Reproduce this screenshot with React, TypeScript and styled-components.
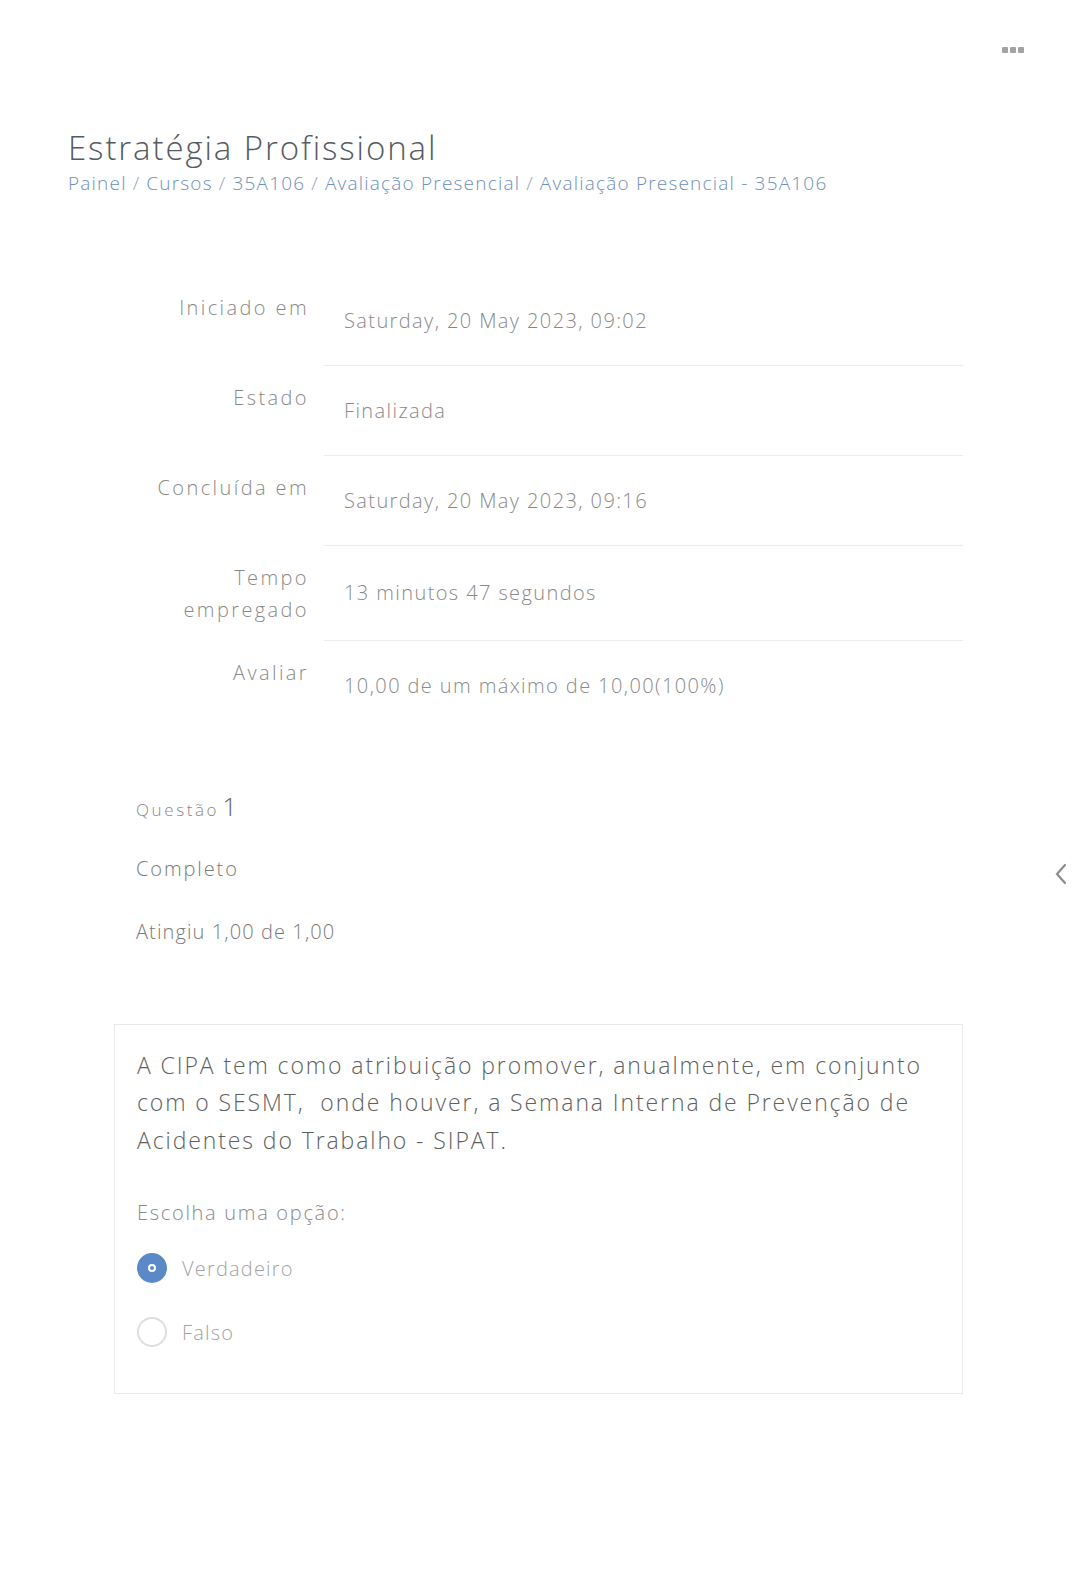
import styled, { createGlobalStyle } from 'styled-components';

const GlobalStyle = createGlobalStyle`
  html, body {
    margin: 0;
    padding: 0;
    background: #fff;
  }
  body {
    font-family: 'Open Sans', 'Liberation Sans', sans-serif;
    font-weight: 300;
    color: #777;
  }
`;

const StyledPage = styled.div`
  position: relative;
  width: 1077px;
  min-height: 1570px;
`;

const StyledTopBar = styled.div`
  display: flex;
  justify-content: flex-end;
  padding: 47px 53px 0 0;
  height: 37px;
`;

const StyledDots = styled.div`
  display: flex;
  gap: 2px;
  height: 6px;

  span {
    width: 6px;
    height: 6px;
    background: #a3a3a3;
    border-radius: 1px;
  }
`;

const StyledHeader = styled.header`
  padding: 46px 0 0 68px;
`;

const StyledTitle = styled.h1`
  margin: 0;
  font-size: 33px;
  font-weight: 300;
  line-height: 1.1;
  color: #555b61;
  letter-spacing: 1.9px;
`;

const StyledCrumbs = styled.nav`
  margin-top: 5px;
  font-size: 19px;
  line-height: 1.3;
  color: #6d8fbd;
  letter-spacing: 1.2px;

  span.sep {
    color: #9aa5b2;
    margin: 0 6px;
  }
`;

const StyledSummary = styled.div`
  display: grid;
  grid-template-columns: 256px 639px;
  margin: 80px 0 0 68px;
`;

const StyledLabel = styled.div`
  padding: 16px 15px 0 0;
  text-align: right;
  font-size: 20px;
  line-height: 32px;
  color: #8a8a8a;
  letter-spacing: 2.4px;
`;

const StyledValue = styled.div<{ $tall?: boolean; $last?: boolean }>`
  display: flex;
  align-items: center;
  height: ${({ $tall }) => ($tall ? 95 : 90)}px;
  padding-left: 20px;
  font-size: 20px;
  color: #8a8a8a;
  border-bottom: ${({ $last }) => ($last ? 'none' : '1px solid #ececec')};
  box-sizing: border-box;
  letter-spacing: 1.4px;
`;

const StyledInfo = styled.div`
  margin: 60px 0 0 136px;
  display: flex;
  flex-direction: column;
`;

const StyledQno = styled.div`
  font-size: 17px;
  color: #8a8a8a;
  line-height: 30px;
  letter-spacing: 2.6px;

  b {
    font-weight: 300;
    font-size: 26px;
    color: #666;
    letter-spacing: 0;
    margin-left: 3px;
  }
`;

const StyledInfoLine = styled.div<{ $gap: number; $spacing: number }>`
  font-size: 20px;
  line-height: 30px;
  color: #7a7a7a;
  margin-top: ${({ $gap }) => $gap}px;
  letter-spacing: ${({ $spacing }) => $spacing}px;
`;

const StyledCard = styled.section`
  margin: 77px 0 0 114px;
  width: 849px;
  box-sizing: border-box;
  border: 1px solid #eaeaea;
  padding: 22px 22px 46px 22px;
`;

const StyledQuestion = styled.div`
  font-size: 23px;
  line-height: 37.5px;
  color: #5f5f5f;
  letter-spacing: 1.9px;
`;

const StyledPrompt = styled.div`
  margin-top: 39px;
  font-size: 20px;
  line-height: 30px;
  color: #8a8a8a;
  letter-spacing: 1.7px;
`;

const StyledOptions = styled.div`
  margin-top: 25px;
  display: flex;
  flex-direction: column;
  gap: 34px;
`;

const StyledOption = styled.label`
  display: flex;
  align-items: center;
  gap: 15px;
  font-size: 20px;
  color: #a3a3a3;
  letter-spacing: 1.2px;
`;

const StyledRadio = styled.span<{ $checked?: boolean }>`
  position: relative;
  width: 30px;
  height: 30px;
  border-radius: 50%;
  box-sizing: border-box;
  background: ${({ $checked }) => ($checked ? '#5b89c8' : '#fff')};
  border: 2px solid ${({ $checked }) => ($checked ? '#5b89c8' : '#dedede')};

  &::after {
    content: '';
    display: ${({ $checked }) => ($checked ? 'block' : 'none')};
    position: absolute;
    left: 50%;
    top: 50%;
    width: 4px;
    height: 4px;
    margin: -4px 0 0 -4px;
    border: 2px solid #fff;
    border-radius: 50%;
    background: #5b89c8;
  }
`;

const StyledDrawerToggle = styled.button`
  position: absolute;
  right: 9px;
  top: 862px;
  border: 0;
  background: none;
  padding: 0;
  cursor: pointer;
`;

const rows = [
  { label: 'Iniciado em', value: 'Saturday, 20 May 2023, 09:02' },
  { label: 'Estado', value: 'Finalizada' },
  { label: 'Concluída em', value: 'Saturday, 20 May 2023, 09:16' },
  { label: 'Tempo empregado', value: '13 minutos 47 segundos', tall: true },
  { label: 'Avaliar', value: '10,00 de um máximo de 10,00(100%)' },
];

const crumbs = ['Painel', 'Cursos', '35A106', 'Avaliação Presencial', 'Avaliação Presencial - 35A106'];

const App = () => {
  return (
    <StyledPage>
      <GlobalStyle />
      <StyledTopBar>
        <StyledDots>
          <span />
          <span />
          <span />
        </StyledDots>
      </StyledTopBar>

      <StyledHeader>
        <StyledTitle>Estratégia Profissional</StyledTitle>
        <StyledCrumbs>
          {crumbs.map((c, i) => (
            <span key={c}>
              {i > 0 && <span className="sep">/</span>}
              {c}
            </span>
          ))}
        </StyledCrumbs>
      </StyledHeader>

      <StyledSummary>
        {rows.map((r, i) => [
          <StyledLabel key={r.label + '-l'}>
            {r.tall ? (
              <>
                Tempo
                <br />
                empregado
              </>
            ) : (
              r.label
            )}
          </StyledLabel>,
          <StyledValue key={r.label + '-v'} $tall={r.tall} $last={i === rows.length - 1}>
            {r.value}
          </StyledValue>,
        ])}
      </StyledSummary>

      <StyledInfo>
        <StyledQno>
          Questão<b>1</b>
        </StyledQno>
        <StyledInfoLine $gap={29} $spacing={1.9}>
          Completo
        </StyledInfoLine>
        <StyledInfoLine $gap={33} $spacing={1.1}>
          Atingiu 1,00 de 1,00
        </StyledInfoLine>
      </StyledInfo>

      <StyledCard>
        <StyledQuestion>
          A CIPA tem como atribuição promover, anualmente, em conjunto com o SESMT,&nbsp; onde houver, a Semana
          Interna de Prevenção de Acidentes do Trabalho - SIPAT.
        </StyledQuestion>
        <StyledPrompt>Escolha uma opção:</StyledPrompt>
        <StyledOptions>
          <StyledOption>
            <StyledRadio $checked />
            Verdadeiro
          </StyledOption>
          <StyledOption>
            <StyledRadio />
            Falso
          </StyledOption>
        </StyledOptions>
      </StyledCard>

      <StyledDrawerToggle aria-label="Abrir bloco">
        <svg width="14" height="24" viewBox="0 0 14 24" fill="none">
          <path d="M11 3 L3 12 L11 21" stroke="#8c8c8c" strokeWidth="2.2" strokeLinecap="round" />
        </svg>
      </StyledDrawerToggle>
    </StyledPage>
  );
};

export default App;
